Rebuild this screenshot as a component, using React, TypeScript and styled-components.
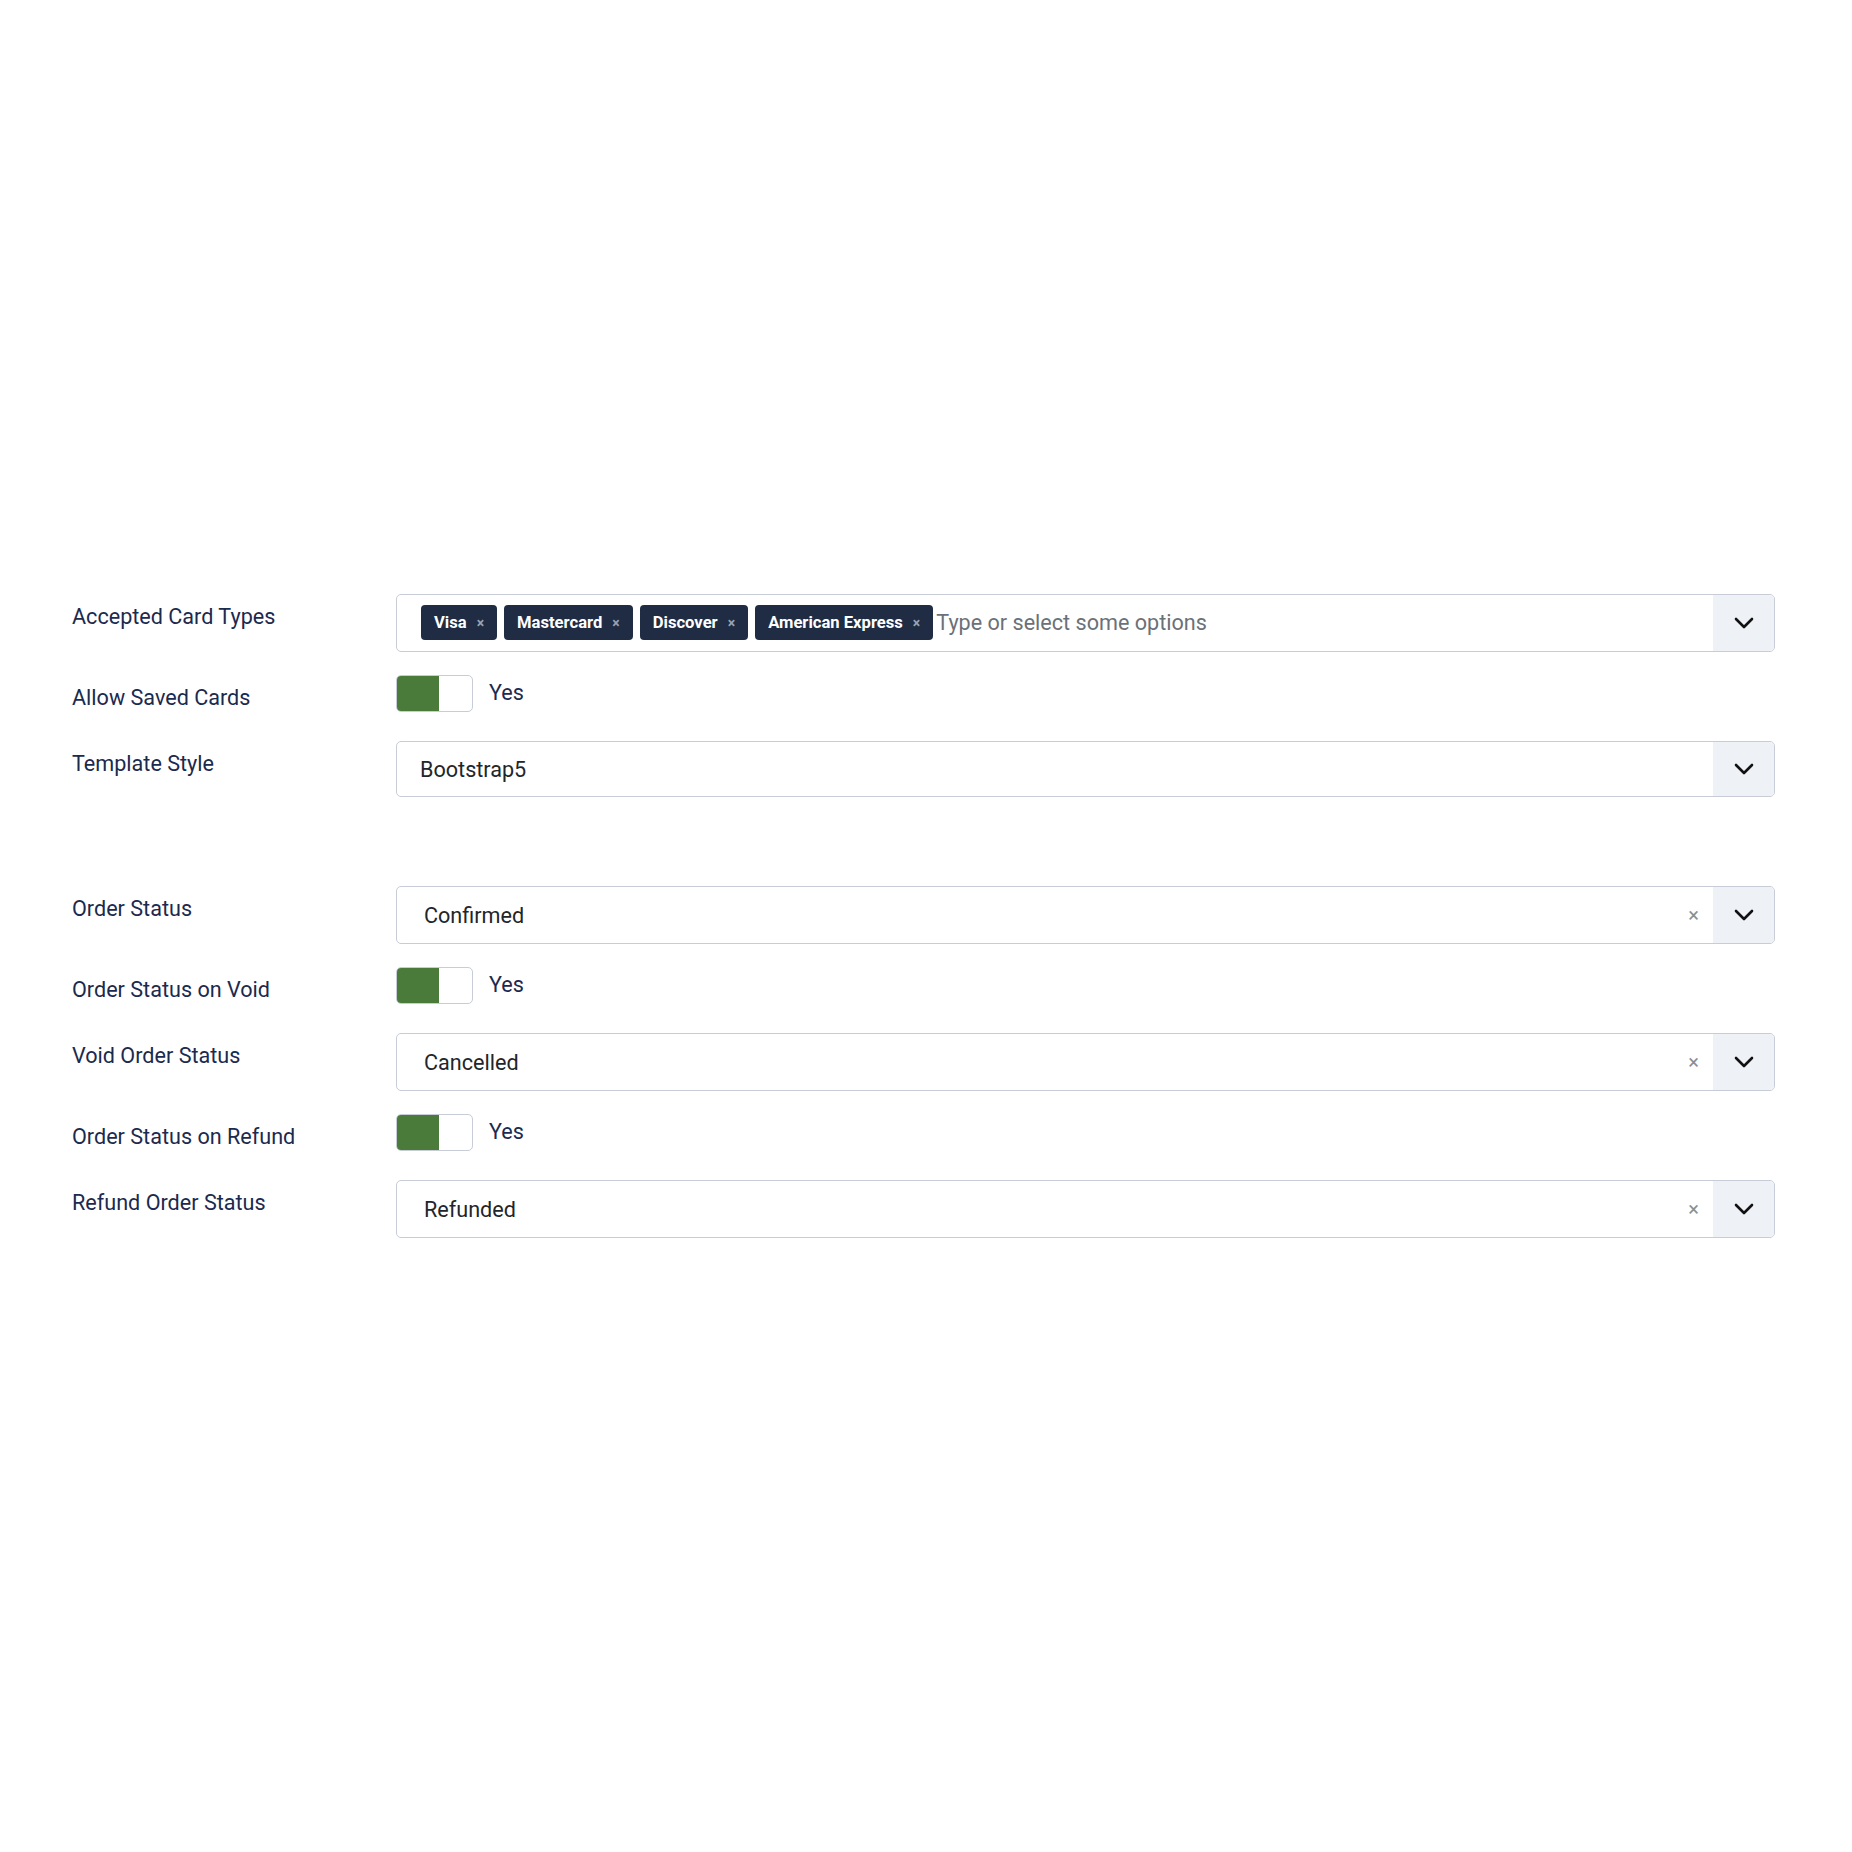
import React from 'react';
import styled, { createGlobalStyle } from 'styled-components';

const GlobalStyle = createGlobalStyle`
  html, body {
    margin: 0;
    padding: 0;
    background: #ffffff;
    font-family: Roboto, "Liberation Sans", Arial, sans-serif;
  }
`;

const Page = styled.div`
  width: 1852px;
  height: 1852px;
  box-sizing: border-box;
  padding: 594px 77px 0 72px;
  background: #fff;
`;

const Fieldset = styled.div<{ $gap?: number }>`
  display: flex;
  flex-direction: column;
  margin-top: ${props => props.$gap || 0}px;
`;

const Row = styled.div<{ $toggle?: boolean }>`
  display: grid;
  grid-template-columns: 324px 1fr;
  align-items: start;
  min-height: ${props => (props.$toggle ? '43px' : 'auto')};
  margin-bottom: 23px;
`;

const Label = styled.label`
  padding-top: 8px;
  font-size: 21.6px;
  line-height: 30px;
  color: #1b2a4e;
`;

const SelectBox = styled.div<{ $height: number }>`
  display: flex;
  align-items: stretch;
  height: ${props => props.$height}px;
  box-sizing: border-box;
  border: 1px solid #c7ccd6;
  border-radius: 5px;
  overflow: hidden;
  background: #fff;
`;

const Value = styled.div<{ $pad: number }>`
  flex: 1;
  display: flex;
  align-items: center;
  padding-left: ${props => props.$pad}px;
  font-size: 21.6px;
  color: #22262a;
`;

const Chips = styled.div`
  flex: 1;
  display: flex;
  align-items: center;
  gap: 7px;
  padding-left: 24px;
  padding-bottom: 1px;
`;

const Chip = styled.span`
  display: inline-flex;
  align-items: center;
  height: 35px;
  box-sizing: border-box;
  padding: 0 13px 0 13px;
  gap: 10px;
  border-radius: 4px;
  background: #1f2c43;
  color: #fff;
  font-size: 16.6px;
  font-weight: 700;
`;

const ChipX = styled.span`
  color: #98a1b1;
  font-size: 14px;
  font-weight: 700;
`;

const Placeholder = styled.span`
  margin-left: -4px;
  font-size: 21.6px;
  color: #6b7178;
`;

const Clear = styled.span`
  display: flex;
  align-items: center;
  padding-right: 14px;
  color: #8a8f96;
  font-size: 20px;
`;

const Caret = styled.div`
  width: 61px;
  display: flex;
  align-items: center;
  justify-content: center;
  background: #eef1f6;
`;

const Switch = styled.div`
  display: flex;
  align-items: center;
  gap: 16px;
`;

const Track = styled.div`
  display: flex;
  width: 77px;
  height: 37px;
  box-sizing: border-box;
  border: 1px solid #c7ccd6;
  border-radius: 5px;
  overflow: hidden;
`;

const Knob = styled.div`
  width: 42px;
  background: #4a7b3b;
`;

const YesText = styled.span`
  font-size: 21.6px;
  color: #1b2a4e;
  margin-top: -3px;
`;

const Chevron = () => (
  <svg width="20" height="12" viewBox="0 0 20 12" fill="none">
    <polyline points="2,2 10,10 18,2" stroke="#111" strokeWidth="2.6" strokeLinecap="round" strokeLinejoin="round" />
  </svg>
);

const Toggle = () => (
  <Switch>
    <Track>
      <Knob />
    </Track>
    <YesText>Yes</YesText>
  </Switch>
);

const ChoiceSelect: React.FC<{ value: string }> = ({ value }) => (
  <SelectBox $height={58}>
    <Value $pad={27}>{value}</Value>
    <Clear>×</Clear>
    <Caret>
      <Chevron />
    </Caret>
  </SelectBox>
);

const cards = ['Visa', 'Mastercard', 'Discover', 'American Express'];

export default function App() {
  return (
    <>
      <GlobalStyle />
      <Page>
        <Fieldset>
          <Row>
            <Label>Accepted Card Types</Label>
            <SelectBox $height={58}>
              <Chips>
                {cards.map(card => (
                  <Chip key={card}>
                    {card}
                    <ChipX>×</ChipX>
                  </Chip>
                ))}
                <Placeholder>Type or select some options</Placeholder>
              </Chips>
              <Caret>
                <Chevron />
              </Caret>
            </SelectBox>
          </Row>
          <Row $toggle>
            <Label>Allow Saved Cards</Label>
            <Toggle />
          </Row>
          <Row>
            <Label>Template Style</Label>
            <SelectBox $height={56}>
              <Value $pad={23}>Bootstrap5</Value>
              <Caret>
                <Chevron />
              </Caret>
            </SelectBox>
          </Row>
        </Fieldset>
        <Fieldset $gap={66}>
          <Row>
            <Label>Order Status</Label>
            <ChoiceSelect value="Confirmed" />
          </Row>
          <Row $toggle>
            <Label>Order Status on Void</Label>
            <Toggle />
          </Row>
          <Row>
            <Label>Void Order Status</Label>
            <ChoiceSelect value="Cancelled" />
          </Row>
          <Row $toggle>
            <Label>Order Status on Refund</Label>
            <Toggle />
          </Row>
          <Row>
            <Label>Refund Order Status</Label>
            <ChoiceSelect value="Refunded" />
          </Row>
        </Fieldset>
      </Page>
    </>
  );
}
